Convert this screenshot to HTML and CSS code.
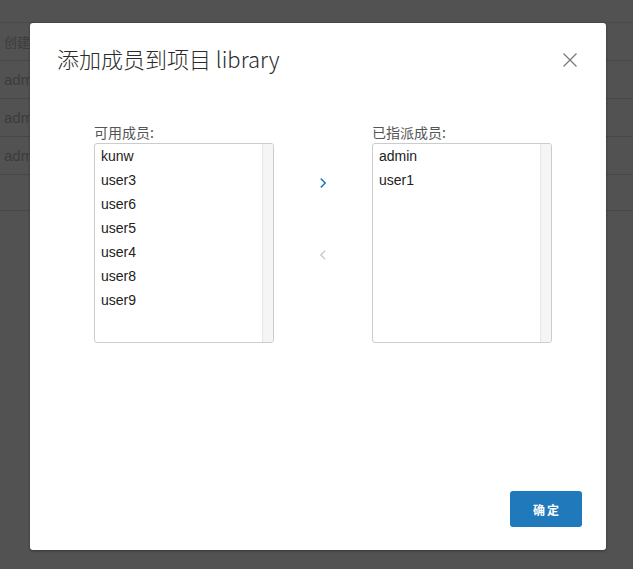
FILE: index.html
```html
<!DOCTYPE html>
<html lang="zh">
<head>
<meta charset="utf-8">
<title>添加成员</title>
<link rel="stylesheet" href="styles.css">
</head>
<body>
<div class="page">
  <div class="table">
    <div class="row head"><span class="cell">创建者</span></div>
    <div class="row"><span class="cell">admin</span></div>
    <div class="row"><span class="cell">admin</span></div>
    <div class="row"><span class="cell">admin</span></div>
    <div class="row last"></div>
  </div>
</div>

<div class="modal">
  <div class="modal-header">
    <h3 class="modal-title">添加成员到项目 library</h3>
    <button class="close" aria-label="关闭">
      <svg width="14" height="14" viewBox="0 0 14 14"><path d="M0.5 0.5 L13.5 13.5 M13.5 0.5 L0.5 13.5" stroke="#7a7a7a" stroke-width="1.3" fill="none"/></svg>
    </button>
  </div>
  <div class="modal-body">
    <div class="col">
      <label class="label">可用成员:</label>
      <div class="listbox">
        <ul class="items">
          <li>kunw</li>
          <li>user3</li>
          <li>user6</li>
          <li>user5</li>
          <li>user4</li>
          <li>user8</li>
          <li>user9</li>
        </ul>
        <div class="scroll"></div>
      </div>
    </div>
    <div class="mid">
      <button class="arrow">
        <svg width="8" height="12" viewBox="0 0 8 12"><path d="M1.8 1.6 L6.2 6 L1.8 10.4" stroke="#1f7bbd" stroke-width="1.5" fill="none"/></svg>
      </button>
      <button class="arrow">
        <svg width="8" height="12" viewBox="0 0 8 12"><path d="M6.2 1.6 L1.8 6 L6.2 10.4" stroke="#c6c6c6" stroke-width="1.3" fill="none"/></svg>
      </button>
    </div>
    <div class="col">
      <label class="label">已指派成员:</label>
      <div class="listbox">
        <ul class="items">
          <li>admin</li>
          <li>user1</li>
        </ul>
        <div class="scroll"></div>
      </div>
    </div>
  </div>
  <div class="modal-footer">
    <button class="btn-primary">确定</button>
  </div>
</div>
</body>
</html>
```

FILE: styles.css
```css
* { box-sizing: border-box; }
html, body { margin: 0; padding: 0; }
body {
  width: 633px;
  height: 569px;
  overflow: hidden;
  background: #525252;
  font-family: "Liberation Sans", "Noto Sans CJK SC", sans-serif;
}
.page { padding-top: 22px; }
.table { border-top: 1px solid #4a4a4a; }
.row {
  height: 38px;
  border-bottom: 1px solid #474747;
  display: flex;
  align-items: center;
  padding-left: 4px;
}
.row.head { height: 38px; }
.row.last { height: 36px; }
.cell { color: #3c3c3c; font-size: 15px; }
.row.head .cell { font-size: 13px; font-family: "Noto Sans CJK SC", sans-serif; }

.modal {
  position: absolute;
  left: 30px;
  top: 23px;
  width: 576px;
  height: 527px;
  background: #fff;
  border-radius: 3px;
  box-shadow: 0 1px 3px rgba(0,0,0,0.35);
  display: flex;
  flex-direction: column;
}
.modal-header {
  display: flex;
  align-items: center;
  justify-content: space-between;
  padding: 20px 29px 0 27px;
  height: 50px;
}
.modal-title {
  margin: 0;
  font-family: "Noto Sans CJK SC", sans-serif;
  font-weight: 300;
  font-size: 22px;
  line-height: 30px;
  color: #2b2b2b;
}
.close {
  border: 0;
  background: none;
  padding: 0;
  width: 14px;
  height: 14px;
  display: flex;
  margin-top: 4px;
}
.modal-body {
  display: flex;
  padding: 50px 54px 0 64px;
}
.col { width: 180px; display: flex; flex-direction: column; }
.label {
  font-family: "Noto Sans CJK SC", sans-serif;
  font-size: 14px;
  line-height: 18px;
  color: #555;
  margin-bottom: 2px;
}
.listbox {
  height: 200px;
  border: 1px solid #cccccc;
  border-radius: 3px;
  display: flex;
  overflow: hidden;
}
.items {
  list-style: none;
  margin: 0;
  padding: 0 0 0 6px;
  flex: 1;
}
.items li {
  font-size: 14px;
  line-height: 24px;
  color: #222;
}
.scroll {
  width: 11px;
  background: #f5f5f5;
  border-left: 1px solid #e6e6e6;
}
.mid {
  width: 98px;
  display: flex;
  flex-direction: column;
  align-items: center;
  padding-top: 48px;
  gap: 48px;
}
.arrow {
  border: 0;
  background: none;
  padding: 0;
  width: 24px;
  height: 24px;
  display: flex;
  align-items: center;
  justify-content: center;
}
.modal-footer {
  margin-top: auto;
  display: flex;
  justify-content: flex-end;
  padding: 0 24px 23px;
}
.btn-primary {
  width: 72px;
  height: 36px;
  border: 0;
  border-radius: 3px;
  background: #1f79bb;
  color: #fff;
  font-family: "Noto Sans CJK SC", sans-serif;
  font-weight: 700;
  font-size: 12px;
  letter-spacing: 2px;
  padding: 0 0 0 2px;
}
```
